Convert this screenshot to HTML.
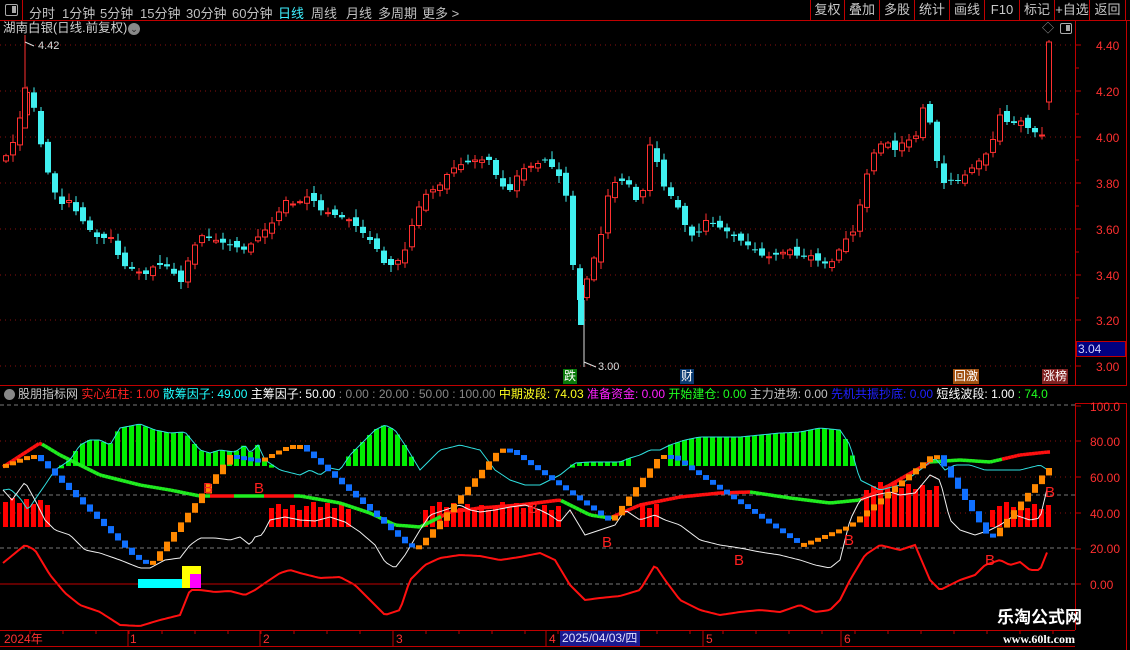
<!DOCTYPE html>
<html><head><meta charset="utf-8"><style>
*{margin:0;padding:0;box-sizing:border-box}
body{width:1130px;height:650px;background:#000;overflow:hidden;position:relative;font-family:"Liberation Sans","Noto Sans CJK SC",sans-serif;font-size:12px;color:#c0c0c0}
.a{position:absolute;white-space:nowrap;line-height:1}
.tb span{position:absolute;top:3px;font-size:13px}
.btn{position:absolute;top:0;height:20px;border-left:1px solid #c00000;text-align:center;line-height:20px;color:#c8c8c8;font-size:13px}
.ax{position:absolute;left:1096px;color:#ff3030;font-size:12px;line-height:1}
.ix{position:absolute;left:1090px;color:#ff3030;font-size:12px;line-height:1}
.tag{position:absolute;height:15px;line-height:15px;font-size:12px;color:#fff;text-align:center}
</style></head><body>
<svg id="s" width="1130" height="650" style="position:absolute;left:0;top:0"></svg>
<div class="a" style="left:0;top:0;width:23px;height:20px;border-right:1px solid #c00000"></div>
<div class="a" style="left:5px;top:4px;width:13px;height:12px;border:1.5px solid #aaa;border-radius:2px"><div style="position:absolute;right:1px;top:1px;width:4px;height:7px;background:#aaa"></div></div>
<div class="tb" style="position:absolute;left:0;top:0;width:800px;height:20px">
<span style="left:29px">分时</span><span style="left:62px">1分钟</span><span style="left:100px">5分钟</span><span style="left:140px">15分钟</span><span style="left:186px">30分钟</span><span style="left:232px">60分钟</span><span style="left:278px;color:#3ef0ff">日线</span><span style="left:311px">周线</span><span style="left:346px">月线</span><span style="left:378px">多周期</span><span style="left:422px">更多 &gt;</span>
</div>
<div class="btn" style="left:810px;width:34px">复权</div><div class="btn" style="left:844px;width:35px">叠加</div><div class="btn" style="left:879px;width:35px">多股</div><div class="btn" style="left:914px;width:35px">统计</div><div class="btn" style="left:949px;width:35px">画线</div><div class="btn" style="left:984px;width:35px">F10</div><div class="btn" style="left:1019px;width:35px">标记</div><div class="btn" style="left:1054px;width:35px">+自选</div><div class="btn" style="left:1089px;width:37px;border-right:1px solid #c00000">返回</div>
<div class="a" style="left:3px;top:22px;font-size:12.5px;color:#d0d0d0">湖南白银(日线.前复权)</div>
<div class="a" style="left:128px;top:23px;width:12px;height:12px;border-radius:50%;background:#888;color:#222;font-size:9px;text-align:center;line-height:12px">⌄</div>
<div class="a" style="left:1042px;top:22px;color:#999;font-size:12px">◇</div>
<div class="a" style="left:1060px;top:23px;width:12px;height:11px;border:1.5px solid #aaa;border-radius:2px"><div style="position:absolute;right:1px;top:1px;width:4px;height:6px;background:#aaa"></div></div>
<div class="a" style="left:38px;top:41px;color:#ddd;font-size:11px">4.42</div>
<div class="a" style="left:598px;top:362px;color:#ddd;font-size:11px">3.00</div>
<div class="ax" style="top:40px">4.40</div><div class="ax" style="top:86px">4.20</div><div class="ax" style="top:132px">4.00</div><div class="ax" style="top:178px">3.80</div><div class="ax" style="top:224px">3.60</div><div class="ax" style="top:270px">3.40</div><div class="ax" style="top:315px">3.20</div><div class="ax" style="top:361px">3.00</div>
<div class="a" style="left:1076px;top:341px;width:50px;height:16px;background:#000080;border:1px solid #c00000;color:#d0d0ff;font-size:12px;line-height:15px;padding-left:1px">3.04</div>
<div class="tag" style="left:563px;top:369px;width:14px;background:#0a7a0a">跌</div>
<div class="tag" style="left:680px;top:369px;width:14px;background:#0a3a70">财</div>
<div class="tag" style="left:953px;top:369px;width:26px;background:#a05010">回激</div>
<div class="tag" style="left:1042px;top:369px;width:26px;background:#802020">涨榜</div>
<div class="a" style="left:4px;top:389px;width:11px;height:11px;border-radius:50%;background:#888"></div>
<div class="a" style="left:18px;top:388px;font-size:12px">
<span style="color:#c8c8c8">股朋指标网 </span><span style="color:#ff2020">实心红柱: 1.00 </span><span style="color:#20ffff">散筹因子: 49.00 </span><span style="color:#fff">主筹因子: 50.00 </span><span style="color:#888">: 0.00 : 20.00 : 50.00 : 100.00 </span><span style="color:#ffff20">中期波段: 74.03 </span><span style="color:#ff20ff">准备资金: 0.00 </span><span style="color:#20ff20">开始建仓: 0.00 </span><span style="color:#c0c0c0">主力进场: 0.00 </span><span style="color:#2020ff">先机共振抄底: 0.00 </span><span style="color:#fff">短线波段: 1.00 </span><span style="color:#20ff20">: 74.0</span>
</div>
<div class="a" style="left:1075px;top:386px;width:55px;height:17px;background:#000"></div>
<div class="ix" style="top:401px">100.0</div><div class="ix" style="top:436px">80.00</div><div class="ix" style="top:472px">60.00</div><div class="ix" style="top:508px">40.00</div><div class="ix" style="top:543px">20.00</div><div class="ix" style="top:579px">0.00</div>
<div class="a" style="left:4px;top:633px;color:#ff3030;font-size:12px">2024年</div>
<div class="a" style="left:130px;top:633px;color:#ff3030">1</div><div class="a" style="left:263px;top:633px;color:#ff3030">2</div><div class="a" style="left:396px;top:633px;color:#ff3030">3</div><div class="a" style="left:549px;top:633px;color:#ff3030">4</div><div class="a" style="left:706px;top:633px;color:#ff3030">5</div><div class="a" style="left:844px;top:633px;color:#ff3030">6</div>
<div class="a" style="left:560px;top:631px;width:80px;height:15px;background:#1a1a90;color:#e0e0ff;font-size:12px;line-height:15px;padding-left:2px">2025/04/03/四</div>
<div class="a" style="left:997px;top:609px;color:#fff;font-size:17px;font-weight:bold">乐淘公式网</div>
<div class="a" style="left:1003px;top:633px;color:#fff;font-size:12px;font-weight:bold;font-family:'Liberation Serif',serif">www.60lt.com</div>
<script>
const S=document.getElementById('s');let h='';
function L(x1,y1,x2,y2,c,w,d){h+=`<line x1="${x1}" y1="${y1}" x2="${x2}" y2="${y2}" stroke="${c}" stroke-width="${w||1}" ${d?`stroke-dasharray="${d}"`:''}/>`}
function R(x,y,w,hh,f,s){h+=`<rect x="${x}" y="${y}" width="${w}" height="${hh}" fill="${f}" ${s?`stroke="${s}"`:''}/>`}
function I(p,x){if(x<=p[0][0])return p[0][1];for(let i=1;i<p.length;i++){if(x<=p[i][0]){const a=p[i-1],b=p[i];return a[1]+(b[1]-a[1])*(x-a[0])/(b[0]-a[0])}}return p[p.length-1][1]}
function PL(p,c,w){let s='';for(let x=p[0][0];x<=p[p.length-1][0];x+=3)s+=x+','+I(p,x).toFixed(1)+' ';h+=`<polyline points="${s}" fill="none" stroke="${c}" stroke-width="${w}"/>`}
L(0,20.5,1130,20.5,'#c00000');L(1075.5,20,1075.5,630,'#c00000');L(1126.5,20,1126.5,650,'#c00000');
L(0,385.5,1126,385.5,'#c00000');L(0,630.5,1075,630.5,'#c00000');L(0,646.5,1075,646.5,'#c00000');L(1076,403.5,1126,403.5,'#c00000');
for(const y of [45,91,137,183,229,275,320,366]){L(0,y,1075,y,'#8a1010',1,'1,4');L(1075,y,1081,y,'#c00000')}
for(const y of [68,114,160,206,252,298,343])L(1075,y,1079,y,'#c00000');
for(const y of [405,495,548,584])L(0,y,1075,y,'#777',1,'4,3');
for(const y of [441,477,513])L(0,y,1075,y,'#8a1010',1,'1,4');
for(const y of [406,441,477,513,549,584])L(1075,y,1081,y,'#c00000');
for(const x of [130,262,395,548,705,843])L(x-2,630,x-2,646,'#c00000');
for(let x=30;x<1075;x+=33)L(x,630,x,634,'#c00000');
const P=[[3,160],[10,150],[18,130],[25,88],[35,110],[42,150],[50,180],[60,205],[70,200],[78,215],[90,230],[100,240],[110,235],[122,265],[135,270],[145,275],[155,265],[165,265],[172,270],[180,285],[190,255],[200,235],[215,240],[230,245],[245,250],[260,235],[275,220],[285,200],[295,205],[310,195],[320,210],[335,215],[350,220],[365,235],[375,245],[385,265],[395,265],[405,250],[415,215],[425,195],[440,185],[450,170],[460,165],[475,160],[490,160],[500,185],[510,190],[520,170],[535,165],[545,160],[555,170],[565,185],[572,260],[580,300],[590,270],[600,240],[610,185],[620,180],[630,185],[640,210],[650,145],[655,155],[665,190],[675,200],[685,225],[695,240],[705,220],[715,225],[725,230],[740,240],[755,250],[765,258],[775,255],[790,250],[800,258],[810,255],[820,262],[830,265],[845,240],[855,230],[865,180],[875,150],[885,140],[895,150],[905,140],[915,140],[925,100],[935,145],[940,185],[950,180],[960,180],[970,170],[980,160],[990,150],[1000,115],[1010,125],[1020,120],[1030,130],[1041,135]];
let prev=165;
for(let i=0;i<149;i++){const x=3+i*7;const c=I(P,x+3);let o=prev+(((i*37)%11)-5)*0.8;const hi=Math.min(o,c)-2-((i*13)%7);const lo=Math.max(o,c)+2+((i*17)%6);
const up=c<o;const col=up?'#ff3030':'#40f0f0';L(x+3,hi,x+3,lo,col);
const top=Math.min(o,c),hh=Math.max(Math.abs(o-c),1);if(up){R(x+.5,top,5,hh,'#000',col)}else R(x,top,6,hh,col);prev=c}
L(25,35,25,90,'#ff3030');R(22.5,88,5,40,'#000','#ff3030');L(25,42,34,46,'#ddd');
L(584,300,584,352,'#ddd');R(578,285,6,40,'#40f0f0');L(584,362,596,367,'#ddd');L(584,352,584,367,'#ddd');
L(1049,40,1049,110,'#ff3030');R(1046.5,42,5,60,'#000','#ff3030');
const cy=[[3,490],[10,489],[20,498],[28,510],[38,495],[45,485],[55,470],[70,460],[80,445],[90,440],[100,440],[110,445],[120,428],[140,424],[155,430],[170,433],[185,432],[200,450],[210,453],[220,450],[235,452],[245,445],[250,453],[258,445],[265,460],[280,470],[300,475],[310,470],[320,475],[330,468],[340,470],[350,455],[360,445],[375,430],[385,425],[395,430],[405,445],[420,470],[440,450],[460,445],[480,450],[495,470],[510,480],[525,485],[540,485],[560,475],[575,463],[590,462],[605,462],[620,462],[630,458],[640,455],[650,450],[660,450],[670,445],[685,440],[700,437],[720,437],[740,437],[760,435],[780,433],[800,432],[820,428],[840,430],[850,445],[860,480],[870,485],[880,490],[900,485],[920,470],[935,458],[945,470],[955,465],[970,465],[985,470],[1000,470],[1020,470],[1040,465],[1048,470]];
const ma=[[3,467],[40,443],[60,455],[100,475],[140,485],[170,490],[200,496],[260,496],[300,496],[340,503],[370,513],[395,525],[420,527],[450,512],[480,508],[520,505],[560,500],[590,515],[610,518],[640,505],[680,497],[720,493],[750,492],[790,498],[830,503],[860,500],[890,485],[930,462],[960,460],[990,462],[1020,455],[1048,452]];
const inG=x=>(x>=55&&x<=270)||(x>=345&&x<=410)||(x>=565&&x<=630)||(x>=665&&x<=850);
const inR=x=>(x<=50)||(x>=265&&x<=350)||(x>=420&&x<=560)||(x>=640&&x<=660)||(x>=860&&x<=935)||(x>=985&&x<=1048);
for(let x=3;x<1048;x+=7){if(inG(x)){const t=I(cy,x+3);R(x,t,5,Math.max(466-t,3),'#00ee00')}
if(inR(x)){const m=(x<60)?505:(x>=860&&x<=935?490:510);const t=m-((x*7)%9);R(x,t,5,527-t,'#ff0000')}}
const redM=x=>x<42||(x>=208&&x<232)||(x>=262&&x<292)||(x>=440&&x<560)||(x>=610&&x<750)||(x>=860&&x<930)||(x>=1000);
for(let x=3;x<1048;x+=3){L(x,I(ma,x),x+3,I(ma,x+3),redM(x)?'#ff1010':'#20ee20',3.5)}
PL(cy,'#30e0e0',1);
const wh=[[3,490],[12,500],[25,482],[35,500],[45,520],[55,530],[70,535],[85,550],[100,553],[120,560],[140,568],[150,568],[165,560],[180,558],[190,545],[200,538],[215,538],[230,540],[240,537],[250,545],[255,537],[262,535],[270,520],[285,517],[300,520],[315,521],[330,517],[345,522],[360,532],[375,545],[385,562],[395,568],[405,555],[420,530],[430,515],[445,510],[460,505],[470,510],[480,512],[495,510],[510,507],[525,505],[540,510],[550,515],[560,522],[570,510],[585,535],[600,530],[615,525],[625,510],[640,520],[655,515],[665,520],[680,525],[700,540],[720,545],[740,548],[760,552],[780,555],[800,560],[815,565],[830,568],[840,560],[850,520],[860,500],[875,495],[890,492],[900,495],[915,493],[930,475],[940,480],[950,520],[960,530],[975,535],[990,530],[1000,525],[1015,515],[1030,520],[1040,518],[1048,485]];
PL(wh,'#f0f0f0',1);
const rd=[[3,563],[25,545],[35,550],[50,575],[65,593],[80,605],[100,612],[120,625],[140,626],[160,620],[180,615],[190,590],[200,590],[215,592],[230,591],[245,595],[255,590],[265,583],[280,573],[290,570],[300,573],[320,578],[340,577],[355,585],[370,600],[385,615],[400,610],[410,580],[425,565],[440,558],[460,555],[480,556],[500,560],[520,557],[540,553],[555,560],[570,585],[585,600],[600,598],[620,596],[640,590],[655,565],[665,580],[680,600],[700,610],[720,615],[740,612],[760,610],[780,612],[800,605],[815,612],[830,610],[840,600],[850,580],[865,555],[880,545],[900,550],[915,545],[930,580],[940,590],[960,580],[975,575],[985,565],[1000,560],[1010,565],[1020,562],[1030,570],[1040,570],[1048,550]];
PL(rd,'#ff1010',2);
L(0,584,400,584,'#c00000');
const st=[[3,465],[30,455],[35,455],[135,558],[150,565],[230,455],[260,460],[290,445],[300,445],[410,548],[420,545],[500,448],[510,450],[610,522],[660,455],[670,455],[800,545],[850,525],[935,452],[990,540],[1048,468]];
let pv=I(st,0);for(let x=3;x<1048;x+=7){const v=I(st,x+3);const up=v<pv-0.5;const flat=Math.abs(v-pv)<0.5;const t=Math.min(v,pv),hh=Math.max(Math.abs(v-pv),4);R(x,t,6,hh,up?'#ff8800':(flat?'#ff8800':'#1070ff'));pv=v}
R(138,579,44,9,'#00ffff');R(182,566,19,22,'#ffff00');R(190,574,11,14,'#ff00ff');
for(const [x,y] of [[203,480],[254,480],[528,500],[602,534],[734,552],[844,532],[985,552],[1045,484]])h+=`<text x="${x}" y="${y+13}" fill="#ff2020" font-size="15" font-family="Liberation Sans">B</text>`;
S.innerHTML=h;
</script>
</body></html>
